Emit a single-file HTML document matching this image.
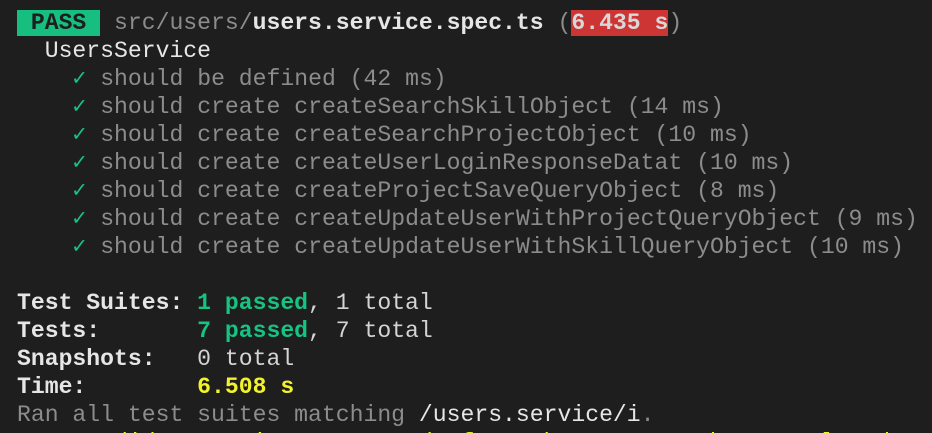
<!DOCTYPE html>
<html><head><meta charset="utf-8"><style>
html,body{margin:0;padding:0;background:#1e1e1e;width:932px;height:433px;overflow:hidden}
.wrap{position:relative;width:932px;height:433px;overflow:hidden}
.t{position:absolute;left:17px;top:9px;font-family:"Liberation Mono",monospace;font-size:23.1px;line-height:28px;color:#d4d4d4;white-space:pre}
.g{color:#8c8c8c}.w{color:#e6e6e6}.b{font-weight:bold}
.ok{color:#17c383}.y{color:#f3f32a}
.pass{background:#16bf80;color:#1e1e1e;font-weight:bold}
.red{background:#cd3434;color:#d8d8d8}
</style></head><body><div class="wrap"><div class="t"><span class="pass"> PASS </span> <span class="g">src/users/</span><span class="w b">users.service.spec.ts</span> <span class="g">(</span><span class="red b">6.435 s</span><span class="g">)</span>
<span class="w">  UsersService</span>
<span class="ok">    ✓</span><span class="g"> should be defined (42 ms)</span>
<span class="ok">    ✓</span><span class="g"> should create createSearchSkillObject (14 ms)</span>
<span class="ok">    ✓</span><span class="g"> should create createSearchProjectObject (10 ms)</span>
<span class="ok">    ✓</span><span class="g"> should create createUserLoginResponseDatat (10 ms)</span>
<span class="ok">    ✓</span><span class="g"> should create createProjectSaveQueryObject (8 ms)</span>
<span class="ok">    ✓</span><span class="g"> should create createUpdateUserWithProjectQueryObject (9 ms)</span>
<span class="ok">    ✓</span><span class="g"> should create createUpdateUserWithSkillQueryObject (10 ms)</span>

<span class="b w">Test Suites: </span><span class="b ok">1 passed</span>, 1 total
<span class="b w">Tests:       </span><span class="b ok">7 passed</span>, 7 total
<span class="b w">Snapshots:   </span>0 total
<span class="b w">Time:        </span><span class="b y">6.508 s</span>
<span class="g">Ran all test suites matching </span><span class="w">/users.service/i</span><span class="g">.</span>
<span class="y">  Jest did not exit one second after the test run has completed.</span></div></div></body></html>
